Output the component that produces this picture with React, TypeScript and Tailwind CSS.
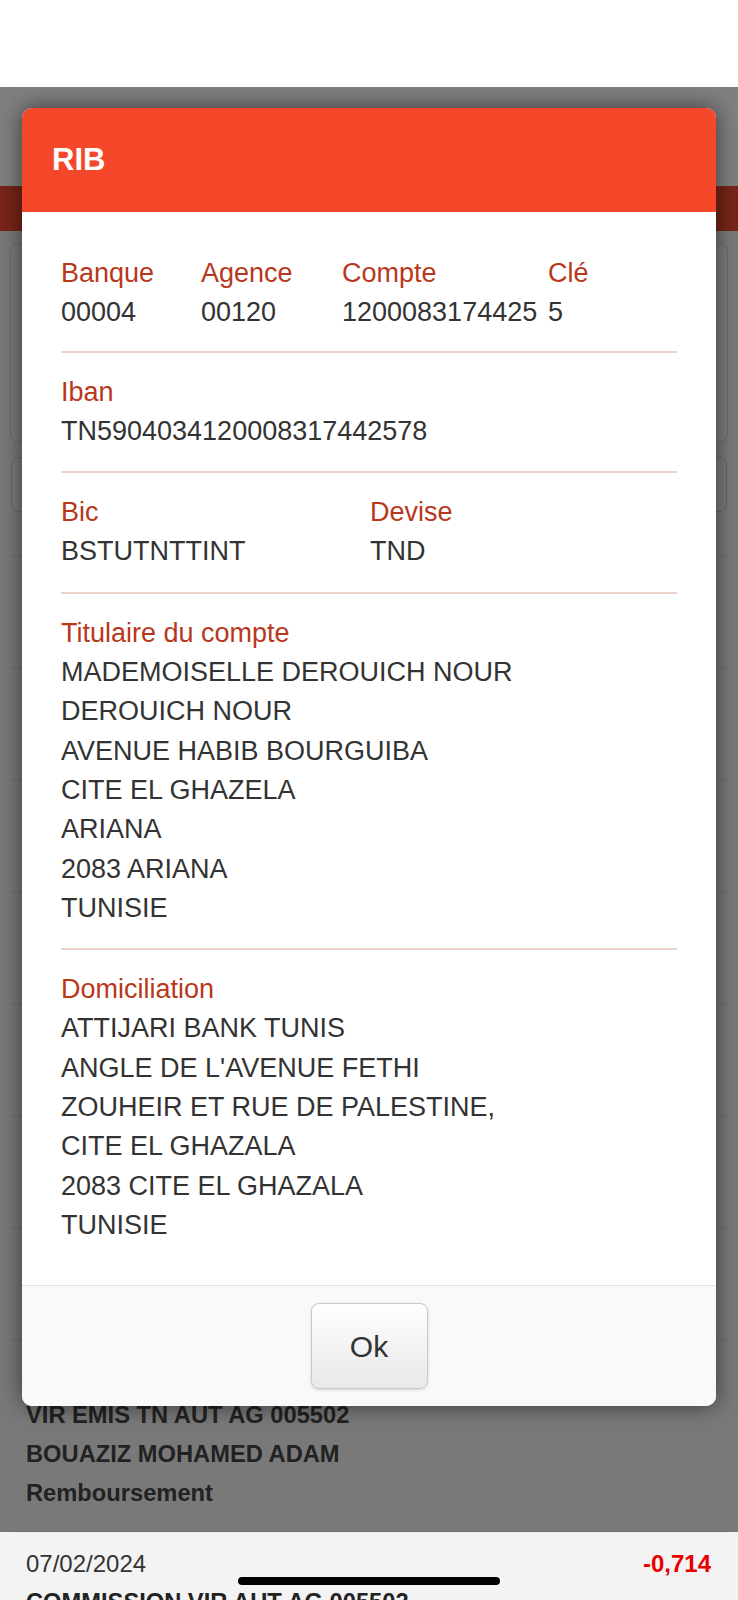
import React from "react";

const label = "text-[#b8381c]";
const value = "text-[#333333]";

const Divider = () => <div className="h-[2px] bg-[#ecd4cd]" />;

const Lines = ({ title, lines }: { title: string; lines: string[] }) => (
  <div className="py-[20px]">
    <div className={label}>{title}</div>
    {lines.map((l, i) => (
      <div key={i} className={value}>
        {l}
      </div>
    ))}
  </div>
);

export default function App() {
  const rows = [0, 1, 2, 3, 4, 5, 6];
  return (
    <div
      className="relative w-[738px] h-[1600px] overflow-hidden bg-[#f3f3f3]"
      style={{ fontFamily: '"Liberation Sans", Arial, sans-serif' }}
    >
      {/* page behind the dialog */}
      <div className="h-[87px] bg-white" />
      <div className="h-[99px] bg-white" />
      <div className="h-[45px] bg-[#ee4a30]" />
      <div className="mx-[10px] mt-[12px] h-[199px] rounded-[8px] border border-[#d6d6d6] bg-[#f7f7f7]" />
      <div className="mx-[11px] mt-[15px] h-[55px] rounded-[8px] border border-[#cfcfcf] bg-[#f7f7f7]" />
      <div className="mx-[10px] h-[44px] border-b border-[#dddddd]" />
      {rows.map((r) => (
        <div key={r} className="mx-[10px] h-[112px] border-b border-[#dddddd]" />
      ))}
      <div className="mx-[10px] pt-[17px] pb-[18px] px-[16px] leading-[39px] text-[23.7px] font-bold text-[#444444] border-b border-[#dddddd]">
        <div className="flex justify-between font-normal text-[24px]">
          <span>07/02/2024</span>
          <span className="font-bold text-[#e60000]">-0,714</span>
        </div>
        <div>VIR EMIS TN AUT AG 005502</div>
        <div>BOUAZIZ MOHAMED ADAM</div>
        <div>Remboursement</div>
      </div>
      <div className="px-[26px] pt-[12px] leading-[39px] text-[#333333]">
        <div className="flex justify-between text-[24px] pr-px">
          <span>07/02/2024</span>
          <span className="font-bold text-[#e60000]">-0,714</span>
        </div>
        <div className="text-[23.7px] font-bold text-[#222222]">COMMISSION VIR AUT AG 005502</div>
      </div>

      {/* overlay */}
      <div className="absolute left-0 right-0 top-[87px] h-[1445px] bg-black/50" />

      {/* dialog */}
      <div className="absolute left-[22px] top-[108px] w-[694px] overflow-hidden rounded-[10px] bg-white shadow-[0_0_22px_rgba(0,0,0,0.55)]">
        <div className="flex h-[104px] items-center bg-[#f5472a] px-[30px]">
          <h1 className="text-[31px] font-bold text-white">RIB</h1>
        </div>
        <div className="px-[39px] pt-[20px] pb-[20px] text-[27px] leading-[39.3px]">
          <div className="grid grid-cols-[140px_141px_206px_1fr] pt-[22px] pb-[18px]">
            <div className={label}>Banque</div>
            <div className={label}>Agence</div>
            <div className={label}>Compte</div>
            <div className={label}>Clé</div>
            <div className={value}>00004</div>
            <div className={value}>00120</div>
            <div className={value}>1200083174425</div>
            <div className={value}>5</div>
          </div>
          <Divider />
          <Lines title="Iban" lines={["TN5904034120008317442578"]} />
          <Divider />
          <div className="grid grid-cols-[309px_1fr] py-[20px]">
            <div className={label}>Bic</div>
            <div className={label}>Devise</div>
            <div className={value}>BSTUTNTTINT</div>
            <div className={value}>TND</div>
          </div>
          <Divider />
          <Lines
            title="Titulaire du compte"
            lines={[
              "MADEMOISELLE DEROUICH NOUR",
              "DEROUICH NOUR",
              "AVENUE HABIB BOURGUIBA",
              "CITE EL GHAZELA",
              "ARIANA",
              "2083 ARIANA",
              "TUNISIE",
            ]}
          />
          <Divider />
          <Lines
            title="Domiciliation"
            lines={[
              "ATTIJARI BANK TUNIS",
              "ANGLE DE L'AVENUE FETHI",
              "ZOUHEIR ET RUE DE PALESTINE,",
              "CITE EL GHAZALA",
              "2083 CITE EL GHAZALA",
              "TUNISIE",
            ]}
          />
        </div>
        <div className="flex h-[121px] items-center justify-center border-t border-[#e2e2e2] bg-[#f9f9f9]">
          <button className="h-[86px] w-[117px] rounded-[8px] border border-[#c9c9c9] bg-gradient-to-b from-[#fefefe] to-[#e9e9e9] text-[30px] text-[#333333] shadow-[0_1px_3px_rgba(0,0,0,0.15)]">
            Ok
          </button>
        </div>
      </div>

      {/* home indicator */}
      <div className="absolute left-[238px] top-[1577px] h-[8px] w-[262px] rounded-full bg-black" />
    </div>
  );
}
